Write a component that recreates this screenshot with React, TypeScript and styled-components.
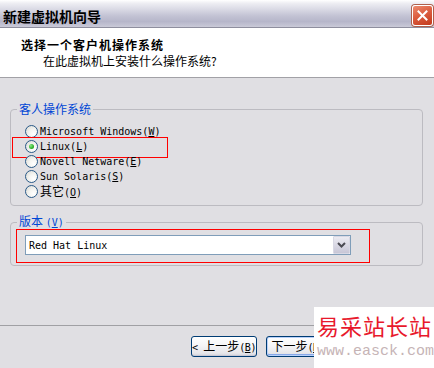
import styled, { createGlobalStyle } from "styled-components";

const GlobalStyle = createGlobalStyle`
  html, body {
    margin: 0;
    padding: 0;
  }
  body {
    width: 434px;
    height: 368px;
    overflow: hidden;
    background: #e0dfe3;
  }
`;

const Window = styled.div`
  position: relative;
  width: 434px;
  height: 368px;
  display: flex;
  flex-direction: column;
  overflow: hidden;
  background: #e0dfe3;
  color: #000;
  font-family: "Noto Sans CJK SC", "DejaVu Sans", sans-serif;
  font-size: 12px;
`;

const TitleBar = styled.div`
  height: 28px;
  box-sizing: border-box;
  padding: 4px 1px 0 3px;
  display: flex;
  align-items: center;
  justify-content: space-between;
  border-bottom: 1px solid #8e8e9e;
  background: linear-gradient(
    to bottom,
    #ffffff 0%,
    #eeeef3 12%,
    #d9d9e4 35%,
    #c2c2d3 60%,
    #b6b6ca 80%,
    #cacad8 100%
  );
`;

const TitleText = styled.span`
  font-size: 14px;
  font-weight: 700;
  line-height: 16px;
`;

const CloseButton = styled.div`
  width: 21px;
  height: 21px;
  box-sizing: border-box;
  border: 1px solid #fff;
  border-radius: 3px;
  box-shadow: 0 0 0 1px #b0604c;
  background: linear-gradient(155deg, #ec8c70 0%, #dc5e40 45%, #c3391c 100%);
  display: flex;
  align-items: center;
  justify-content: center;
`;

const Header = styled.div`
  height: 50px;
  box-sizing: border-box;
  padding: 10px 0 0 21px;
  background: #fff;
  border-bottom: 1px solid #a2a1a6;
`;

const HeaderTitle = styled.div`
  font-weight: 700;
  line-height: 14px;
  letter-spacing: 1px;
`;

const HeaderSub = styled.div`
  margin: 2px 0 0 22px;
  line-height: 14px;
`;

const Body = styled.div`
  flex: 1;
  padding-top: 24px;
  display: flex;
  flex-direction: column;
  gap: 8px;
`;

const Group = styled.fieldset`
  margin: 0 11px 0 10px;
  padding: 0;
  min-width: 0;
  border: 1px solid #bcbbc1;
  border-radius: 4px;
`;

const Legend = styled.legend`
  margin-left: 6px;
  padding: 0 2px;
  color: #0046d5;
  font-size: 12px;
  line-height: 14px;
`;

const RadioList = styled.div`
  padding: 8px 0 6px 14px;
  display: flex;
  flex-direction: column;
`;

const Option = styled.label`
  position: relative;
  height: 15px;
  display: flex;
  align-items: center;
  gap: 2px;
  white-space: nowrap;
  line-height: 15px;
`;

const RadioDot = styled.span<{ $checked?: boolean }>`
  width: 13px;
  height: 13px;
  flex: none;
  box-sizing: border-box;
  border: 1px solid #2a5a88;
  border-radius: 50%;
  background: radial-gradient(circle at 70% 70%, #ffffff 0%, #f3f3f0 45%, #d6d6d0 100%);
  display: flex;
  align-items: center;
  justify-content: center;

  &::after {
    content: "";
    display: ${(p) => (p.$checked ? "block" : "none")};
    width: 5px;
    height: 5px;
    border-radius: 50%;
    background: radial-gradient(circle at 35% 35%, #8ae886 0%, #2fb12b 60%, #1c8d1a 100%);
  }
`;

const Mono = styled.span`
  font-family: "DejaVu Sans Mono", "Liberation Mono", monospace;
  font-size: 10px;
`;

const Mark = styled.span<{ $left: number; $top: number; $width: number; $height: number }>`
  position: absolute;
  left: ${(p) => p.$left}px;
  top: ${(p) => p.$top}px;
  width: ${(p) => p.$width}px;
  height: ${(p) => p.$height}px;
  box-sizing: border-box;
  border: 1px solid #ff0000;
  pointer-events: none;
`;

const SelectArea = styled.div`
  padding: 5px 0 10px 14px;
`;

const SelectWrap = styled.div`
  position: relative;
  width: 326px;
`;

const Select = styled.div`
  height: 20px;
  box-sizing: border-box;
  border: 1px solid #7f9db9;
  background: #fff;
  display: flex;
  align-items: center;
  justify-content: space-between;
  padding-left: 3px;
`;

const ArrowButton = styled.span`
  width: 17px;
  height: 18px;
  box-sizing: border-box;
  border: 1px solid #d8d8e4;
  border-radius: 1px;
  background: linear-gradient(to bottom, #ecebf2 0%, #d6d5e2 60%, #c7c6d6 100%);
  display: flex;
  align-items: center;
  justify-content: center;
`;

const Footer = styled.div`
  height: 43px;
  box-sizing: border-box;
  border-top: 1px solid #a0a0a4;
  padding: 10px 0 0 191px;
  display: flex;
  gap: 9px;
`;

const Button = styled.button<{ $width: number; $default?: boolean }>`
  width: ${(p) => p.$width}px;
  height: 21px;
  flex: none;
  box-sizing: border-box;
  padding: 0;
  border: 1px solid #003c74;
  border-radius: 3px;
  background: linear-gradient(to bottom, #ffffff 0%, #f5f5f7 45%, #e6e6ea 85%, #d2d2da 100%);
  box-shadow: ${(p) =>
    p.$default
      ? "inset 0 0 0 1px #b9d1fa, inset 0 -1px 0 1px #88a8e8"
      : "inset 0 -1px 0 0 #c8c8d4"};
  color: #000;
  font-family: "Noto Sans CJK SC", "DejaVu Sans", sans-serif;
  font-size: 12px;
  line-height: 14px;
  display: flex;
  align-items: center;
  justify-content: center;
`;

const ButtonLabel = styled.span`
  white-space: pre;
  flex: none;

  ${Mono} {
    letter-spacing: -0.4px;
  }
`;

const Watermark = styled.div`
  position: absolute;
  right: 0;
  bottom: 0;
  width: 120px;
  height: 61px;
  box-sizing: border-box;
  padding: 6px 0 0 3px;
  background: #fff;
  display: flex;
  flex-direction: column;
  gap: 7px;
`;

const WatermarkTitle = styled.div`
  color: #e8192c;
  font-size: 22px;
  line-height: 24px;
  letter-spacing: 1px;
  white-space: nowrap;
`;

const WatermarkUrl = styled.div`
  color: #c6b4b6;
  font-family: "Liberation Mono", monospace;
  font-size: 15px;
  line-height: 15px;
  white-space: nowrap;
`;

function CloseIcon() {
  return (
    <svg width="11" height="11" viewBox="0 0 11 11">
      <path d="M1.5 1.5 L9.5 9.5 M9.5 1.5 L1.5 9.5" stroke="#fff" strokeWidth="2" strokeLinecap="square" />
    </svg>
  );
}

function ChevronIcon() {
  return (
    <svg width="9" height="6" viewBox="0 0 9 6">
      <path d="M1 1 L4.5 4.5 L8 1" stroke="#4a4a52" strokeWidth="2" fill="none" />
    </svg>
  );
}

const systems = [
  { key: "win", checked: false, label: <Mono>Microsoft Windows(<u>W</u>)</Mono> },
  { key: "linux", checked: true, label: <Mono>Linux(<u>L</u>)</Mono> },
  { key: "novell", checked: false, label: <Mono>Novell Netware(<u>E</u>)</Mono> },
  { key: "sun", checked: false, label: <Mono>Sun Solaris(<u>S</u>)</Mono> },
  {
    key: "other",
    checked: false,
    label: (
      <span>
        其它<Mono>(<u>O</u>)</Mono>
      </span>
    ),
  },
];

export default function App() {
  return (
    <Window>
      <GlobalStyle />
      <TitleBar>
        <TitleText>新建虚拟机向导</TitleText>
        <CloseButton>
          <CloseIcon />
        </CloseButton>
      </TitleBar>

      <Header>
        <HeaderTitle>选择一个客户机操作系统</HeaderTitle>
        <HeaderSub>在此虚拟机上安装什么操作系统?</HeaderSub>
      </Header>

      <Body>
        <Group>
          <Legend>客人操作系统</Legend>
          <RadioList>
            {systems.map((s) => (
              <Option key={s.key}>
                <RadioDot $checked={s.checked} />
                {s.label}
                {s.checked && <Mark $left={-13} $top={-2} $width={156} $height={21} />}
              </Option>
            ))}
          </RadioList>
        </Group>

        <Group>
          <Legend>
            版本 <Mono>(<u>V</u>)</Mono>
          </Legend>
          <SelectArea>
            <SelectWrap>
              <Select>
                <Mono>Red Hat Linux</Mono>
                <ArrowButton>
                  <ChevronIcon />
                </ArrowButton>
              </Select>
              <Mark $left={-9} $top={-6} $width={354} $height={34} />
            </SelectWrap>
          </SelectArea>
        </Group>
      </Body>

      <Footer>
        <Button $width={66}>
          <ButtonLabel>
            <Mono>{"< "}</Mono>上一步<Mono>(<u>B</u>)</Mono>
          </ButtonLabel>
        </Button>
        <Button $width={75} $default>
          <ButtonLabel>
            下一步<Mono>(<u>N</u>){" >"}</Mono>
          </ButtonLabel>
        </Button>
      </Footer>

      <Watermark>
        <WatermarkTitle>易采站长站</WatermarkTitle>
        <WatermarkUrl>www.easck.com</WatermarkUrl>
      </Watermark>
    </Window>
  );
}
